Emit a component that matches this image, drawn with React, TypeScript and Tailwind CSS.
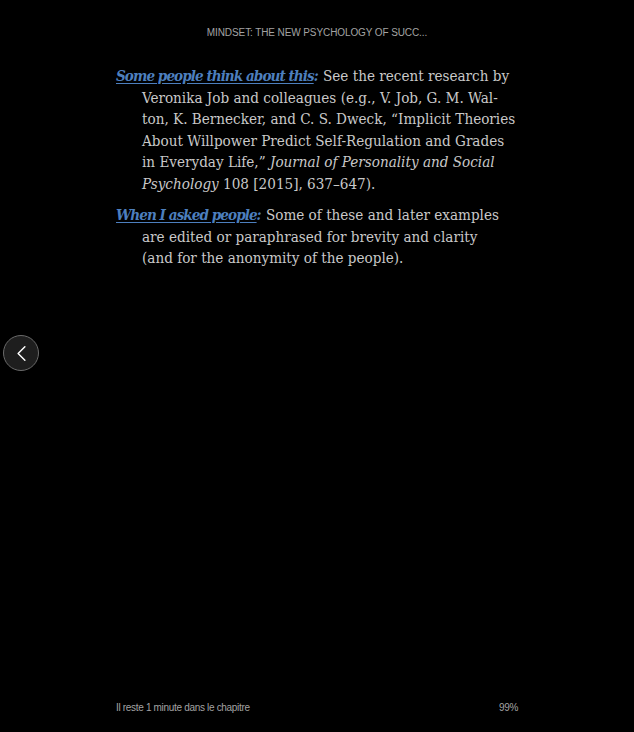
import { ChevronLeft } from "lucide-react";

const serif = "font-['DejaVu_Serif_Condensed','DejaVu_Serif',serif]";

const Note = ({
  term,
  lines,
}: {
  term: string;
  lines: React.ReactNode[];
}) => (
  <p className="pl-[26px] -indent-[26px] leading-[21.6px] whitespace-nowrap">
    <a className="italic font-bold text-[#4d7fbe] underline underline-offset-2 tracking-[-0.95px]">{term}</a>
    <span className="italic font-bold text-[#4d7fbe]">:</span>{" "}
    {lines.map((l, i) => (
      <span key={i}>
        {l}
        {i < lines.length - 1 && <br />}
      </span>
    ))}
  </p>
);

export default function App() {
  return (
    <div className="relative w-full h-[732px] bg-black flex flex-col font-['Liberation_Sans',sans-serif]">
      {/* header */}
      <div className="pt-[25px] text-center text-[10px] text-[#a3a3a3] tracking-[-0.1px]">
        MINDSET: THE NEW PSYCHOLOGY OF SUCC...
      </div>

      {/* page text */}
      <div className={`mt-[26px] mx-auto w-[402px] ${serif} text-[15.1px] text-[#c9c9c9] flex flex-col gap-[9.5px]`}>
        <Note
          term="Some people think about this"
          lines={[
            "See the recent research by",
            "Veronika Job and colleagues (e.g., V. Job, G. M. Wal-",
            "ton, K. Bernecker, and C. S. Dweck, \u201cImplicit Theories",
            "About Willpower Predict Self-Regulation and Grades",
            <>
              in Everyday Life,{"\u201d"} <i>Journal of Personality and Social</i>
            </>,
            <>
              <i>Psychology</i> 108 [2015], 637–647).
            </>,
          ]}
        />
        <Note
          term="When I asked people"
          lines={[
            "Some of these and later examples",
            "are edited or paraphrased for brevity and clarity",
            "(and for the anonymity of the people).",
          ]}
        />
      </div>

      {/* back */}
      <button className="absolute left-[3px] top-[335px] w-[36px] h-[36px] rounded-full bg-[#1e1e1e] border border-[#6a6a6a] flex items-center justify-center text-white">
        <ChevronLeft size={27} strokeWidth={1.3} />
      </button>

      {/* footer */}
      <div className="mt-auto mb-[17px] mx-auto w-[402px] flex justify-between text-[10px] text-[#a3a3a3] tracking-[-0.32px]">
        <span>Il reste 1 minute dans le chapitre</span>
        <span>99%</span>
      </div>
    </div>
  );
}
